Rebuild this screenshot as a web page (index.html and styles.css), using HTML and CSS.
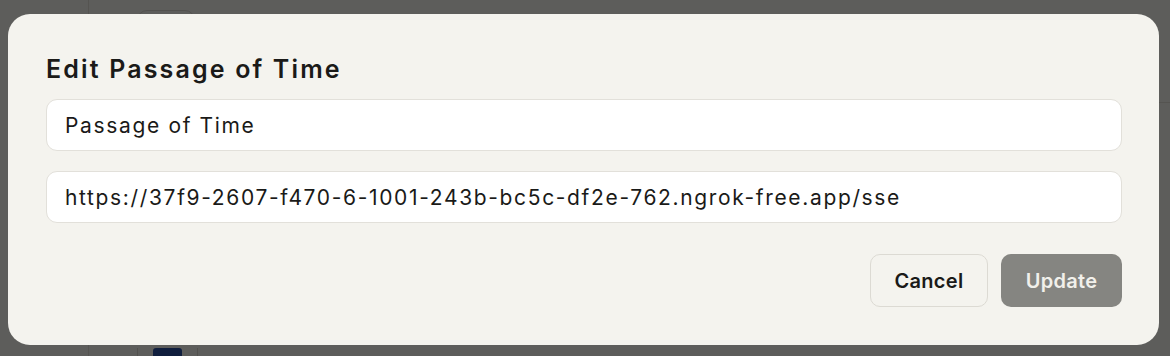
FILE: index.html
```html
<!DOCTYPE html>
<html lang="en">
<head>
    <meta charset="UTF-8">
    <title>Edit Passage of Time</title>
    <link rel="stylesheet" href="styles.css">
</head>
<body>
    <!-- App im Hintergrund -->
    <div class="app">
        <div class="sidebar"></div>
        <div class="main">
            <div class="topbar">
                <div class="pill"></div>
            </div>
            <div class="row">
                <div class="cell"><span class="chip"></span></div>
                <div class="cell-text"></div>
            </div>
        </div>
        <div class="backdrop"></div>
    </div>

    <!-- Dialog -->
    <div class="dialog">
        <h2 class="dialog-title">Edit Passage of Time</h2>
        <input class="field" type="text" value="Passage of Time">
        <input class="field" type="text" value="https://37f9-2607-f470-6-1001-243b-bc5c-df2e-762.ngrok-free.app/sse">
        <div class="actions">
            <button class="btn btn-cancel">Cancel</button>
            <button class="btn btn-update" disabled>Update</button>
        </div>
    </div>
</body>
</html>
```

FILE: styles.css
```css
/* Grundlayout */
body {
    margin: 0;
    font-family: Inter, "Noto Sans", sans-serif;
    background: #5e5e5c;
    color: #1a1a18;
    height: 356px;
    overflow: hidden;
}

/* Hintergrund-App */
.app {
    display: flex;
    height: 356px;
    background: #f4f3ee;
}
.sidebar {
    width: 88px;
    border-right: 1px solid #e0ded6;
}
.main {
    flex: 1;
    display: flex;
    flex-direction: column;
    justify-content: space-between;
}
.topbar {
    height: 103px;
    box-sizing: border-box;
    padding: 10px 0 0 48px;
    border-bottom: 1px solid #e0ded6;
}
.pill {
    width: 56px;
    height: 20px;
    border: 1px solid #d8d6ce;
    border-radius: 10px;
}
.row {
    display: flex;
    height: 8px;
    padding-left: 48px;
}
.cell {
    width: 61px;
    border-left: 1px solid #d8d6ce;
    border-right: 1px solid #d8d6ce;
    padding-left: 15px;
    box-sizing: border-box;
}
.chip {
    display: block;
    width: 29px;
    height: 8px;
    background: #2c4fa0;
    border-radius: 3px 3px 0 0;
}
.backdrop {
    position: absolute;
    inset: 0;
    background: rgba(0, 0, 0, 0.62);
}

/* Dialog */
.dialog {
    position: absolute;
    top: 14px;
    left: 8px;
    width: 1151px;
    height: 331px;
    box-sizing: border-box;
    padding: 41px 37px 0 38px;
    background: #f4f3ee;
    border-radius: 22px;
    display: flex;
    flex-direction: column;
    gap: 20px;
}
.dialog-title {
    margin: 0 0 -4px;
    font-size: 25px;
    font-weight: 600;
    line-height: 28px;
    letter-spacing: 2.15px;
    color: #1a1a18;
}

/* Eingabefelder */
.field {
    height: 52px;
    flex-shrink: 0;
    box-sizing: border-box;
    padding: 0 18px;
    font-family: inherit;
    font-size: 21px;
    letter-spacing: 1.65px;
    color: #1a1a18;
    background: #ffffff;
    border: 1px solid #e2e0da;
    border-radius: 11px;
    outline: none;
}

/* Buttons */
.actions {
    display: flex;
    justify-content: flex-end;
    gap: 13px;
    margin-top: 11px;
}
.btn {
    height: 53px;
    font-family: inherit;
    font-size: 20px;
    font-weight: 600;
    letter-spacing: 0.3px;
    border-radius: 10px;
    cursor: pointer;
}
.btn-cancel {
    width: 118px;
    background: #f4f3ee;
    border: 1px solid #dcdad3;
    color: #1a1a18;
}
.btn-update {
    width: 121px;
    background: #858581;
    border: none;
    color: #f1f0eb;
}
```
